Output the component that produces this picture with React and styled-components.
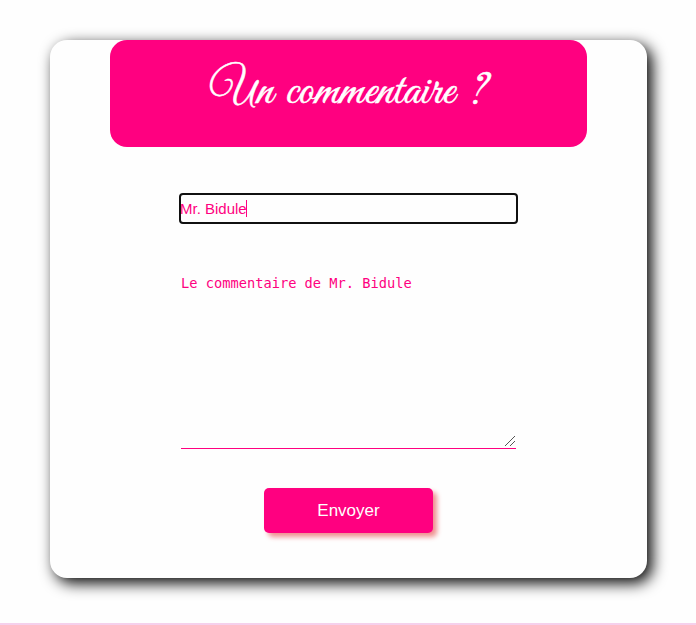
import React from "react";
import styled, { createGlobalStyle } from "styled-components";

const pink = "#ff0080";

const GlobalStyle = createGlobalStyle`
  *, *::before, *::after { box-sizing: border-box; }
  body { margin: 0; background: #fefefe; overflow: hidden; }
`;

const Page = styled.main`
  height: 625px;
  padding: 40px 49px 0 50px;
  border-bottom: 2px solid #f5d0ec;
`;

const Card = styled.form`
  display: flex;
  flex-direction: column;
  align-items: center;
  height: 538px;
  border-radius: 17px;
  background: #fefefe;
  box-shadow: 5px 5px 15px #000;
`;

const Title = styled.h1`
  width: 477px;
  height: 107px;
  margin: 0;
  padding-top: 22px;
  border-radius: 17px;
  background: ${pink};
  color: #fff;
  font: 400 48px/60px "Great Vibes", "Liberation Serif", cursive;
  -webkit-text-stroke: 0.5px #fff;
  letter-spacing: 0.3px;
  word-spacing: 3.5px;
  text-align: center;
  white-space: nowrap;
`;

const NameField = styled.div`
  position: relative;
  width: 335px;
  height: 27px;
  margin-top: 48px;
`;

const NameInput = styled.input`
  display: block;
  width: 100%;
  height: 100%;
  padding: 0;
  border: 0;
  border-radius: 2px;
  outline: 2px solid #101010;
  outline-offset: 0;
  background: transparent;
  color: ${pink};
  caret-color: transparent;
  font: 15px "Liberation Sans", Arial, sans-serif;
  text-indent: -1px;
`;

const Caret = styled.span`
  position: absolute;
  top: 5px;
  left: 65px;
  width: 1px;
  height: 17px;
  background: ${pink};
`;

const CommentField = styled.div`
  position: relative;
  width: 335px;
  height: 175px;
  margin-top: 52px;
`;

const CommentInput = styled.textarea`
  display: block;
  width: 100%;
  height: 100%;
  padding: 0;
  border: 0;
  border-bottom: 1px solid ${pink};
  outline: 0;
  resize: none;
  background: transparent;
  color: ${pink};
  font: 13.7px/18px "DejaVu Sans Mono", monospace;
`;

const Grip = styled.svg`
  position: absolute;
  right: 0;
  bottom: 2px;
  pointer-events: none;
`;

const SubmitButton = styled.button`
  width: 169px;
  height: 45px;
  margin-top: 39px;
  padding: 0;
  border: 0;
  border-radius: 5px;
  background: ${pink};
  box-shadow: 4px 4px 5px #f09090;
  color: #fff;
  font: 17px "Liberation Sans", Arial, sans-serif;
`;

export default function App() {
  return (
    <>
      <GlobalStyle />
      <Page>
        <Card onSubmit={(event) => event.preventDefault()}>
          <Title>Un commentaire ?</Title>
          <NameField>
            <NameInput aria-label="Nom" defaultValue="Mr. Bidule" />
            <Caret />
          </NameField>
          <CommentField>
            <CommentInput
              aria-label="Commentaire"
              spellCheck={false}
              defaultValue="Le commentaire de Mr. Bidule"
            />
            <Grip width="12" height="12" viewBox="0 0 12 12" fill="none" stroke="#555">
              <path d="M1 11 11 1M6 11l5-5" />
            </Grip>
          </CommentField>
          <SubmitButton type="submit">Envoyer</SubmitButton>
        </Card>
      </Page>
    </>
  );
}
